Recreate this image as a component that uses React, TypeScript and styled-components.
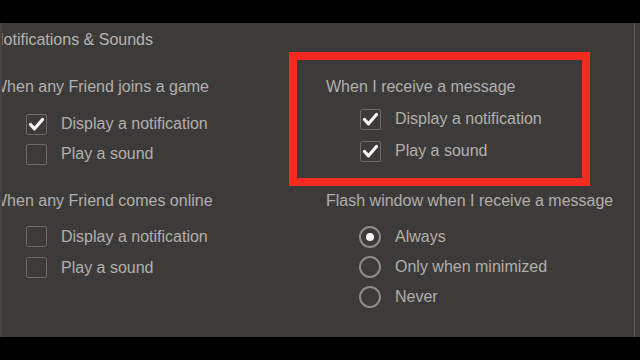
import React from "react";
import styled, { createGlobalStyle } from "styled-components";

const Global = createGlobalStyle`
  html, body { margin: 0; padding: 0; background: #000; }
  body { font-family: "Liberation Sans", Arial, sans-serif; }
`;

const Screen = styled.div`
  width: 640px;
  height: 360px;
  background: #000;
  padding: 23px 0;
  box-sizing: border-box;
  overflow: hidden;
`;

const Frame = styled.div`
  height: 314px;
  display: flex;
  background: #3b3b3a;
`;

const Window = styled.div`
  flex: 0 0 635px;
  box-sizing: border-box;
  background: #3d3b39;
  border-left: 2px solid #474543;
  border-right: 1px solid #5b5956;
  overflow: hidden;
  position: relative;
`;

const Content = styled.div`
  margin-left: -10px;
  padding-top: 7px;
  color: #b1afac;
  font-size: 16px;
`;

const Title = styled.div`
  line-height: 20px;
  height: 20px;
  margin-bottom: 27px;
  color: #b5b3b0;
`;

const Grid = styled.div`
  display: grid;
  grid-template-columns: 334px 1fr;
  grid-template-rows: 92px auto;
  row-gap: 22px;
`;

const Group = styled.div`
  position: relative;
`;

const Header = styled.div`
  line-height: 20px;
  height: 20px;
  white-space: nowrap;
`;

const List = styled.div<{ $top: number; $row: number }>`
  margin-top: ${(p) => p.$top}px;
  padding-left: 34px;
  display: grid;
  grid-auto-rows: ${(p) => p.$row}px;
`;

const Row = styled.div`
  display: flex;
  align-items: center;
  gap: 14px;
  white-space: nowrap;
`;

const Box = styled.span`
  width: 21px;
  height: 21px;
  box-sizing: border-box;
  border: 1.5px solid #6c6a67;
  border-radius: 2px;
  display: flex;
  align-items: center;
  justify-content: center;
  flex: none;
`;

const Radio = styled.span<{ $on?: boolean }>`
  width: 22px;
  height: 22px;
  box-sizing: border-box;
  border: 2px solid #8d8b88;
  border-radius: 50%;
  display: flex;
  align-items: center;
  justify-content: center;
  flex: none;
  margin-left: -1px;
  &::after {
    content: "";
    width: 8px;
    height: 8px;
    border-radius: 50%;
    background: #f4f4f4;
    display: ${(p) => (p.$on ? "block" : "none")};
  }
`;

const Highlight = styled.div`
  position: absolute;
  left: -37px;
  top: -25px;
  width: 301px;
  height: 134px;
  box-sizing: border-box;
  border: 8px solid #f52b21;
  pointer-events: none;
`;

const Check = () => (
  <svg width="21" height="21" viewBox="0 0 21 21" style={{ margin: -1.5 }}>
    <path
      d="M4.5 10.5 L8.5 14.8 L16.5 5.5"
      fill="none"
      stroke="#f6f6f6"
      strokeWidth="3.2"
      strokeLinecap="round"
      strokeLinejoin="round"
    />
  </svg>
);

const CheckRow = ({ label, on }: { label: string; on?: boolean }) => (
  <Row>
    <Box>{on && <Check />}</Box>
    <span>{label}</span>
  </Row>
);

const RadioRow = ({ label, on }: { label: string; on?: boolean }) => (
  <Row>
    <Radio $on={on} />
    <span>{label}</span>
  </Row>
);

export default function App() {
  return (
    <>
      <Global />
      <Screen>
        <Frame>
          <Window>
            <Content>
              <Title>Notifications &amp; Sounds</Title>
              <Grid>
                <Group>
                  <Header>When any Friend joins a game</Header>
                  <List $top={12} $row={30}>
                    <CheckRow label="Display a notification" on />
                    <CheckRow label="Play a sound" />
                  </List>
                </Group>
                <Group>
                  <Header>When I receive a message</Header>
                  <List $top={6} $row={32}>
                    <CheckRow label="Display a notification" on />
                    <CheckRow label="Play a sound" on />
                  </List>
                  <Highlight />
                </Group>
                <Group>
                  <Header>When any Friend comes online</Header>
                  <List $top={10} $row={31}>
                    <CheckRow label="Display a notification" />
                    <CheckRow label="Play a sound" />
                  </List>
                </Group>
                <Group>
                  <Header>Flash window when I receive a message</Header>
                  <List $top={11} $row={30}>
                    <RadioRow label="Always" on />
                    <RadioRow label="Only when minimized" />
                    <RadioRow label="Never" />
                  </List>
                </Group>
              </Grid>
            </Content>
          </Window>
        </Frame>
      </Screen>
    </>
  );
}
